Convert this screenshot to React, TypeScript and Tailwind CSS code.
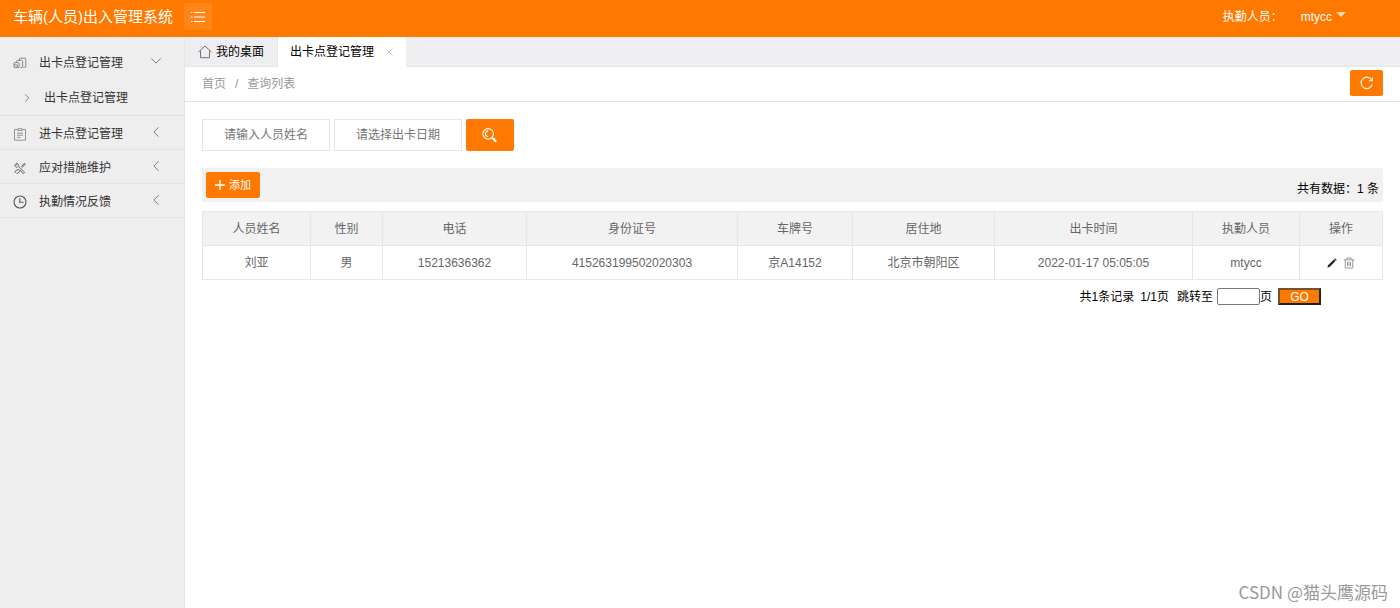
import React from "react";

type IconProps = { className?: string; children: React.ReactNode; width?: string };

function Icon({ className = "", children, width = "1" }: IconProps) {
  return (
    <svg
      viewBox="0 0 14 14"
      className={`shrink-0 ${className}`}
      fill="none"
      stroke="currentColor"
      strokeWidth={width}
      aria-hidden="true"
    >
      {children}
    </svg>
  );
}

const HomeIcon = () => (
  <Icon className="h-3.5 w-3.5 text-[#666]">
    <path d="M0.5 7 7 1l6.5 6M2.5 5.5v7.2h9V5.5" strokeWidth="0.9" />
  </Icon>
);

const StackIcon = () => (
  <Icon className="h-3.5 w-3.5 text-[#777]" width="0.9">
    <path d="M6.4 4V3.2q0-1 1-1h4.4q1 0 1 1v7.2q0 1-1 1h-1.4" />
    <path d="M3.6 6.2V5.4q0-1 1-1h4q1 0 1 1v5.2q0 1-1 1H7.2" />
    <path d="M1 7.6q0-1 1-1h3.2q1 0 1 1v3q0 1-1 1H2q-1 0-1-1zM1 9h3.4v2.4" />
  </Icon>
);

const ClipboardIcon = () => (
  <Icon className="h-3.5 w-3.5 text-[#888]" width="0.9">
    <path d="M4.5 2.5h-3v10.7h11V2.5h-3M4.8 3.6V1.8h1.4q.8-1.4 1.6 0h1.4v1.8zM4 6.2h6M4 8.2h6M4 10.4h3.5" />
  </Icon>
);

const ToolsIcon = () => (
  <Icon className="h-3.5 w-3.5 text-[#666]" width="1">
    <path d="m4.8 5.8-1 .6-2.4-2 .8-.7 1 .4.5-.6-.6-1 .7-.6 2 2.3-.4 1 5.4 5.2q1 1 .3 1.7t-1.8-.2L7 8.6" />
    <path d="m8.4 5.7 3.2-3.5.8.8-3.2 3.6M6 8.2 2.8 9.6l-1 2.2M7 9.2 5.4 12l-1.8.4" />
  </Icon>
);

const ClockIcon = () => (
  <Icon className="h-3.5 w-3.5 text-[#555]" width="1.1">
    <circle cx="7" cy="7" r="6" />
    <path d="M6.8 3.2v4.1h3.8" />
  </Icon>
);

const ChevronDown = () => (
  <Icon className="h-3 w-3 text-[#666]">
    <path d="m1.5 4 5.5 5.5L12.5 4" />
  </Icon>
);

const ChevronLeft = () => (
  <Icon className="h-3 w-3 text-[#666]">
    <path d="M10 1.5 4.5 7l5.5 5.5" />
  </Icon>
);

const ChevronRight = () => (
  <Icon className="h-2.5 w-2.5 text-[#777]" width="1.3">
    <path d="m4.5 2 5 5-5 5" />
  </Icon>
);

const SearchIcon = () => (
  <Icon className="h-4 w-4">
    <circle cx="5.4" cy="6" r="4.6" />
    <path d="M5.4 3.3A2.6 2.6 0 0 0 5 8.4M8.7 9.3l1 1" />
    <path d="m10 10.4 1.8 1.8" strokeWidth="2" strokeLinecap="round" />
  </Icon>
);

const RefreshIcon = () => (
  <Icon className="h-3.5 w-3.5" width="1.1">
    <path d="M12 4.5A5.7 5.7 0 1 0 12.3 8.4M12.4 1.4v3.4H8.9" />
  </Icon>
);

const PencilIcon = () => (
  <Icon className="h-2.5 w-2.5 text-[#222]">
    <path d="m.8 13.2.8-3.2L9.8 2.2l2 2-8 8zM10.5 1.5l1-.9 1.9 1.9-.9 1z" fill="currentColor" strokeWidth="0.3" />
  </Icon>
);

const TrashIcon = () => (
  <Icon className="h-3 w-3 text-[#888]">
    <path d="M.8 3.3h12.4M4.6 3V1.2h4.8V3M2.6 3.5v9.3h8.8V3.5M5.2 5.5v5.2M7 5.5v5.2M8.8 5.5v5.2" />
  </Icon>
);

const sections = [
  { label: "进卡点登记管理", icon: <ClipboardIcon /> },
  { label: "应对措施维护", icon: <ToolsIcon /> },
  { label: "执勤情况反馈", icon: <ClockIcon /> },
];

const columns = [
  { title: "人员姓名", width: "w-[108px]" },
  { title: "性别", width: "w-[72px]" },
  { title: "电话", width: "w-[144px]" },
  { title: "身份证号", width: "w-[211px]" },
  { title: "车牌号", width: "w-[115px]" },
  { title: "居住地", width: "w-[142px]" },
  { title: "出卡时间", width: "w-[198px]" },
  { title: "执勤人员", width: "w-[107px]" },
  { title: "操作", width: "" },
];

const record = [
  "刘亚",
  "男",
  "15213636362",
  "415263199502020303",
  "京A14152",
  "北京市朝阳区",
  "2022-01-17 05:05:05",
  "mtycc",
];

function Header() {
  return (
    <header className="flex h-[37px] items-center bg-[#ff7800] pl-[13px] text-white">
      <h1 className="pb-1 text-[15px] whitespace-nowrap sm:w-[171px]">车辆(人员)出入管理系统</h1>
      <button type="button" aria-label="展开菜单" className="mb-1 flex h-[27px] w-7 items-center justify-center rounded-xs bg-[#ff8519]">
        <Icon className="h-3.5 w-3.5">
          <path d="M0 2.5h1.5M3 2.5h11M0 7h1.5M3 7h11M0 11.5h1.5M3 11.5h11" />
        </Icon>
      </button>
      <div className="ml-auto flex items-center gap-[18px] pr-[54px] pb-1">
        <span>执勤人员：</span>
        <button type="button" className="flex items-center gap-1">
          mtycc
          <svg viewBox="0 0 10 5" className="mb-1 h-[5px] w-2.5 text-[#ffdcb8]" aria-hidden="true">
            <path d="M0 0h10L5 5z" fill="currentColor" />
          </svg>
        </button>
      </div>
    </header>
  );
}

function Sidebar() {
  return (
    <nav className="w-[185px] shrink-0 border-r border-[#e6e6e6] bg-[#eee] pt-2 text-[#333]">
      <div className="border-b border-[#e2e2e2]">
        <a href="#out" className="flex h-[35px] items-center pr-[22px] pl-[13px]">
          <StackIcon />
          <span className="ml-3 flex-1">出卡点登记管理</span>
          <span className="pb-1"><ChevronDown /></span>
        </a>
        <a href="#out-list" className="flex h-[35px] items-center pl-[22px]">
          <ChevronRight />
          <span className="ml-3">出卡点登记管理</span>
        </a>
      </div>
      {sections.map((s) => (
        <a key={s.label} href="#section" className="flex h-[34px] items-center border-b border-[#e2e2e2] pt-[3px] pr-[22px] pl-[13px]">
          {s.icon}
          <span className="ml-3 flex-1">{s.label}</span>
          <span className="pb-1"><ChevronLeft /></span>
        </a>
      ))}
    </nav>
  );
}

function Tabs() {
  return (
    <div className="flex h-[30px] border-b border-[#e6e6e6] bg-[#eeeef0] text-black">
      <a href="#home" className="flex items-center gap-1 border-r border-[#e6e6e6] px-[13px]">
        <HomeIcon />
        我的桌面
      </a>
      <div className="-mb-px flex items-center gap-2.5 bg-white px-3">
        <a href="#out-list">出卡点登记管理</a>
        <button type="button" aria-label="关闭" className="text-[#bbb]">
          <Icon className="h-2.5 w-2.5">
            <path d="m2 2 10 10M12 2 2 12" />
          </Icon>
        </button>
      </div>
    </div>
  );
}

export default function App() {
  return (
    <div className="flex min-h-screen flex-col bg-white font-['Liberation_Sans','Noto_Sans_CJK_SC',sans-serif] text-xs text-[#333]">
      <Header />
      <div className="flex flex-1">
        <Sidebar />
        <main className="flex min-w-0 flex-1 flex-col">
          <Tabs />
          <div className="flex h-[35px] items-center justify-between border-b border-[#e5e5e5] px-[17px] text-[#999]">
            <div className="flex gap-[9px]">
              <a href="#home">首页</a>
              <span>/</span>
              <a href="#list">查询列表</a>
            </div>
            <button type="button" aria-label="刷新" className="mb-0.5 flex h-[26px] w-[33px] items-center justify-center rounded-xs bg-[#ff7800] text-white">
              <RefreshIcon />
            </button>
          </div>

          <div className="px-[17px] pt-[17px]">
            <form className="flex gap-1" onSubmit={(e) => e.preventDefault()}>
              <input
                aria-label="人员姓名"
                placeholder="请输入人员姓名"
                className="h-8 w-32 border border-[#e6e6e6] text-center placeholder:text-[#757575]"
              />
              <input
                aria-label="出卡日期"
                placeholder="请选择出卡日期"
                className="h-8 w-32 border border-[#e6e6e6] text-center placeholder:text-[#757575]"
              />
              <button type="submit" aria-label="查询" className="flex h-8 w-12 items-center justify-center rounded-xs bg-[#ff7800] text-white">
                <SearchIcon />
              </button>
            </form>

            <div className="mt-[17px] flex h-[34px] items-center justify-between bg-[#f1f1f1] px-1">
              <button type="button" className="flex h-[26px] w-[54px] items-center justify-center gap-1 rounded-xs bg-[#ff7800] text-[11px] text-white">
                <Icon className="h-2.5 w-2.5" width="2">
                  <path d="M7 0v14M0 7h14" />
                </Icon>
                添加
              </button>
              <span className="pt-2 text-black">共有数据：1 条</span>
            </div>

            <table className="mt-[9px] w-full table-fixed border-collapse text-center text-[#666]">
              <thead className="bg-[#f2f2f2]">
                <tr className="h-[34px]">
                  {columns.map((c) => (
                    <th key={c.title} className={`border border-[#e6e6e6] font-normal ${c.width}`}>
                      {c.title}
                    </th>
                  ))}
                </tr>
              </thead>
              <tbody>
                <tr className="h-[34px]">
                  {record.map((v) => (
                    <td key={v} className="border border-[#e6e6e6]">{v}</td>
                  ))}
                  <td className="border border-[#e6e6e6]">
                    <div className="flex items-center justify-center gap-1.5">
                      <button type="button" aria-label="编辑"><PencilIcon /></button>
                      <button type="button" aria-label="删除"><TrashIcon /></button>
                    </div>
                  </td>
                </tr>
              </tbody>
            </table>

            <div className="mt-2 flex items-center justify-end pr-[62px] text-black">
              <span className="mr-1.5">共1条记录</span>
              <span className="mr-2">1/1页</span>
              <label htmlFor="page" className="mr-1">跳转至</label>
              <input id="page" className="h-[17px] w-[43px] rounded-xs border border-[#767676] px-1" />
              <span className="mr-1.5">页</span>
              <button
                type="button"
                className="flex h-[17px] w-[43px] items-center justify-center border-2 border-t-[#76502c] border-r-[#222] border-b-[#222] border-l-[#76502c] bg-[#ff7800] text-white"
              >
                GO
              </button>
            </div>
          </div>

          <footer className="mt-auto pr-3 text-right font-['Noto_Sans_CJK_SC',sans-serif] text-[17px] leading-8 text-[#999]">
            CSDN @猫头鹰源码
          </footer>
        </main>
      </div>
    </div>
  );
}
